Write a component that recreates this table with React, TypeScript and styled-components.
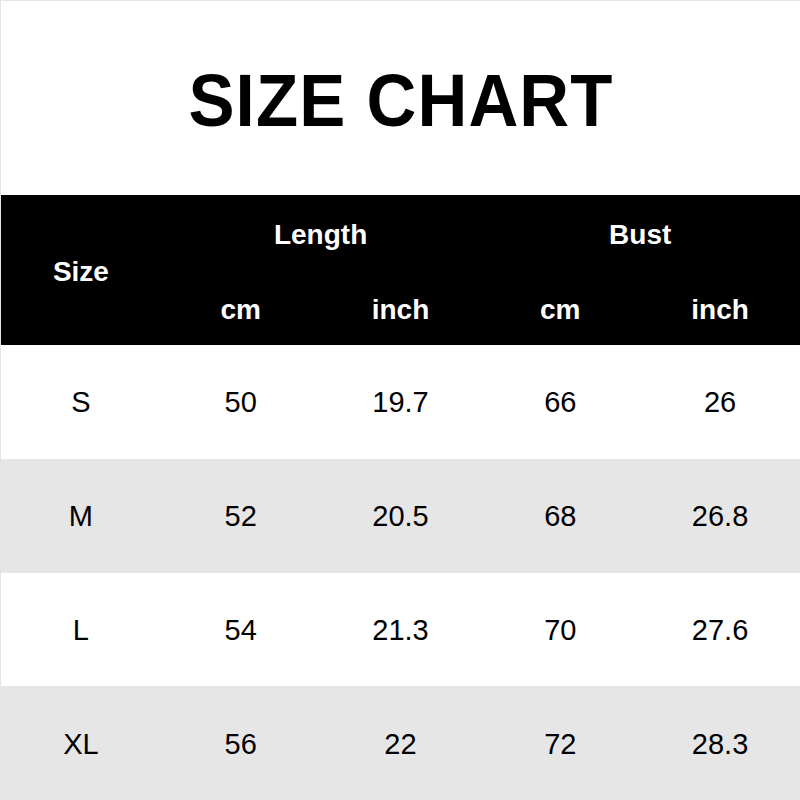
import React from "react";
import styled, { createGlobalStyle } from "styled-components";

const Global = createGlobalStyle`
  html, body { margin: 0; padding: 0; background: #fff; }
  body { font-family: "Liberation Sans", Arial, sans-serif; }
`;

const Page = styled.div`
  width: 800px;
  height: 800px;
  box-sizing: border-box;
  border-left: 1px solid #e4e4e4;
  border-top: 1px solid #e4e4e4;
  display: flex;
  flex-direction: column;
  background: #fff;
`;

const TitleBar = styled.div`
  height: 194px;
  display: flex;
  align-items: center;
  justify-content: center;
  padding-top: 4px;
  box-sizing: border-box;
`;

const Title = styled.h1`
  margin: 0;
  font-size: 75px;
  font-weight: 700;
  color: #000;
  letter-spacing: 1.2px;
  margin-right: -1.2px;
  transform: scaleX(0.92);
  white-space: nowrap;
`;

const Header = styled.div`
  background: #000;
  height: 150px;
  display: grid;
  grid-template-columns: repeat(5, 1fr);
  grid-template-rows: 76px 74px;
  color: #fff;
  font-weight: 700;
  font-size: 28px;
`;

const HeadCell = styled.div<{ $col: string; $row: string }>`
  grid-column: ${(p) => p.$col};
  grid-row: ${(p) => p.$row};
  display: flex;
  align-items: center;
  justify-content: center;
  padding-top: 4px;
`;

const Row = styled.div<{ $shade: boolean }>`
  flex: 1;
  display: grid;
  grid-template-columns: repeat(5, 1fr);
  background: ${(p) => (p.$shade ? "#e7e6e7" : "#fff")};
  font-size: 29px;
  color: #000;
`;

const Cell = styled.div`
  display: flex;
  align-items: center;
  justify-content: center;
  padding-top: 2px;
`;

const rows = [
  ["S", "50", "19.7", "66", "26"],
  ["M", "52", "20.5", "68", "26.8"],
  ["L", "54", "21.3", "70", "27.6"],
  ["XL", "56", "22", "72", "28.3"],
];

export default function App() {
  return (
    <Page>
      <Global />
      <TitleBar>
        <Title>SIZE CHART</Title>
      </TitleBar>
      <Header>
        <HeadCell $col="1" $row="1 / span 2">Size</HeadCell>
        <HeadCell $col="2 / span 2" $row="1">Length</HeadCell>
        <HeadCell $col="4 / span 2" $row="1">Bust</HeadCell>
        <HeadCell $col="2" $row="2">cm</HeadCell>
        <HeadCell $col="3" $row="2">inch</HeadCell>
        <HeadCell $col="4" $row="2">cm</HeadCell>
        <HeadCell $col="5" $row="2">inch</HeadCell>
      </Header>
      {rows.map((r, i) => (
        <Row key={r[0]} $shade={i % 2 === 1}>
          {r.map((v, j) => (
            <Cell key={j}>{v}</Cell>
          ))}
        </Row>
      ))}
    </Page>
  );
}
